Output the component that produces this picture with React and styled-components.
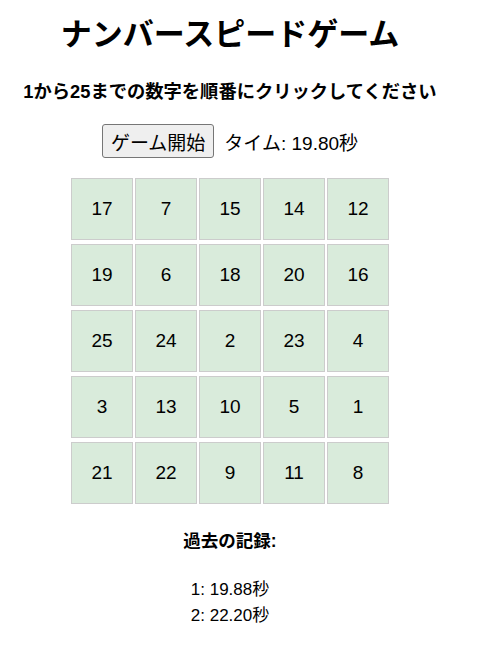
import styled, { createGlobalStyle } from "styled-components"

const GlobalStyle = createGlobalStyle`
  body {
    margin: 0;
    background: #ffffff;
    font-family: "Liberation Sans", "Noto Sans CJK JP", sans-serif;
    color: #000;
  }
`

const Page = styled.div`
  width: 460px;
  display: flex;
  flex-direction: column;
  align-items: center;
  text-align: center;
`

const Title = styled.h1`
  font-size: 31px;
  font-weight: bold;
  margin: 14px 0 0;
  line-height: 42px;
`

const Subtitle = styled.p`
  font-size: 18.3px;
  font-weight: bold;
  margin: 23px 0 0;
  line-height: 26px;
`

const Controls = styled.div`
  display: flex;
  align-items: center;
  gap: 10px;
  margin-top: 19px;
  font-size: 19px;
`

const StartButton = styled.button`
  font-family: inherit;
  font-size: 19px;
  height: 34px;
  padding: 0 8px;
  background: #efefef;
  border: 1px solid #767676;
  border-radius: 3px;
  color: #000;
`

const Board = styled.div`
  display: grid;
  grid-template-columns: repeat(5, 62px);
  grid-auto-rows: 62px;
  column-gap: 2px;
  row-gap: 4px;
  margin-top: 20px;
`

const Cell = styled.div`
  box-sizing: border-box;
  display: flex;
  align-items: center;
  justify-content: center;
  background: #d9ebdb;
  border: 1px solid #cccccc;
  font-size: 19px;
`

const HistoryTitle = styled.h3`
  font-size: 17.5px;
  font-weight: bold;
  margin: 24px 0 0;
  line-height: 26px;
`

const HistoryList = styled.div`
  margin-top: 23px;
  font-size: 17px;
  line-height: 26px;
`

const numbers = [17, 7, 15, 14, 12, 19, 6, 18, 20, 16, 25, 24, 2, 23, 4, 3, 13, 10, 5, 1, 21, 22, 9, 11, 8]
const records = ["19.88", "22.20"]

export default function App() {
  return (
    <>
      <GlobalStyle />
      <Page>
        <Title>ナンバースピードゲーム</Title>
        <Subtitle>1から25までの数字を順番にクリックしてください</Subtitle>
        <Controls>
          <StartButton>ゲーム開始</StartButton>
          <span>タイム: 19.80秒</span>
        </Controls>
        <Board>
          {numbers.map((n) => (
            <Cell key={n}>{n}</Cell>
          ))}
        </Board>
        <HistoryTitle>過去の記録:</HistoryTitle>
        <HistoryList>
          {records.map((r, i) => (
            <div key={i}>{i + 1}: {r}秒</div>
          ))}
        </HistoryList>
      </Page>
    </>
  )
}
